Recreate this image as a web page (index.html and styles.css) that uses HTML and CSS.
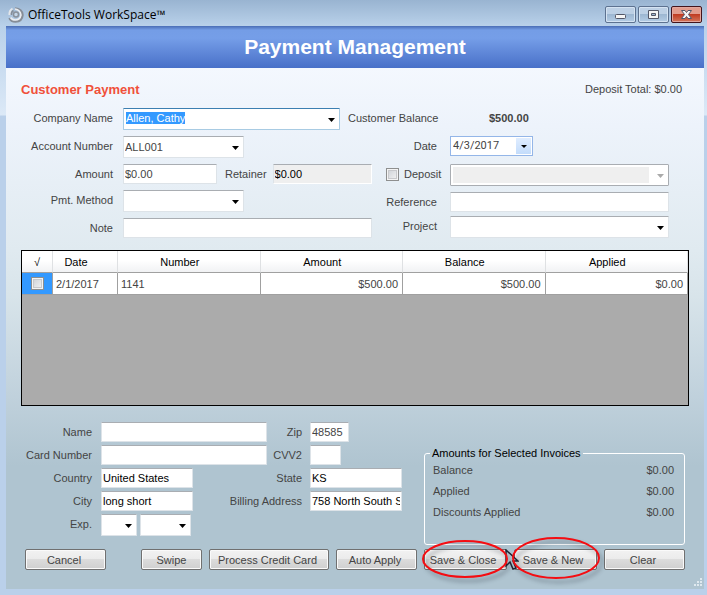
FILE: index.html
```html
<!DOCTYPE html>
<html lang="en">
<head>
    <meta charset="UTF-8">
    <meta name="viewport" content="width=device-width, initial-scale=1.0">
    <title>OfficeTools WorkSpace™</title>
    <link rel="stylesheet" href="styles.css">
</head>
<body>
    <div class="window">
        <header class="titlebar">
            <svg class="app-icon" width="16" height="16" viewBox="0 0 16 16" fill="none">
                <path d="M7 1.500 Q14 2 14.500 8 Q14 14.500 7.500 14.500 Q3 14.500 1.500 11" stroke="#868d97" stroke-width="2.500"/>
                <path d="M7 2 Q12.500 3 13 8 Q12 13 7.500 13 Q4 13 2.500 10.500" stroke="#eceef1" stroke-width="1.500"/>
                <path d="M4.500 1.500 Q1 3.500 1.500 8" stroke="#e3e6ea" stroke-width="2"/>
                <path d="M5.500 3.500 Q3 5 3.500 8" stroke="#868d97" stroke-width="1.500"/>
                <circle cx="8" cy="7.500" r="2.500" fill="#c5d6e8" stroke="#8a919b" stroke-width="1.500"/>
            </svg>
            <span class="app-name">OfficeTools WorkSpace™</span>
            <div class="window-buttons">
                <button type="button" class="window-button" aria-label="Minimize">
                    <svg width="13" height="11" viewBox="0 0 13 11"><rect x="1.5" y="5.5" width="10" height="4" rx="1" fill="#f5f5f5" stroke="#535666"/></svg>
                </button>
                <button type="button" class="window-button" aria-label="Maximize">
                    <svg width="13" height="11" viewBox="0 0 13 11"><path d="M1.5 1.5h10v8h-10z M4.500 4.500v2h4v-2z" fill="#f5f5f5" fill-rule="evenodd" stroke="#535666"/></svg>
                </button>
                <button type="button" class="window-button close" aria-label="Close">
                    <svg width="13" height="11" viewBox="0 0 13 11"><path d="M1.500 1.500h3.500l1.500 2 1.500-2h3.500l-3 4 3 4h-3.500l-1.500-2-1.500 2h-3.500l3-4z" fill="#f5f5f5" stroke="#535666"/></svg>
                </button>
            </div>
        </header>

        <main class="content">
            <h1 class="banner">Payment Management</h1>
            <form class="payment-form" id="paymentForm">
                <div class="form-head">
                    <h2>Customer Payment</h2>
                    <span class="deposit-total">Deposit Total: $0.00</span>
                </div>

                <div class="row company-row">
                    <label class="label" for="company">Company Name</label>
                    <input type="text" class="field combo company" id="company" value="Allen, Cathy" autocomplete="off">
                    <span class="balance-label">Customer Balance</span>
                    <strong class="balance">$500.00</strong>
                </div>

                <div class="columns">
                    <div class="left">
                        <div class="row">
                            <label class="label" for="account">Account Number</label>
                            <select class="field combo medium" id="account"><option>ALL001</option></select>
                        </div>
                        <div class="row">
                            <label class="label" for="amount">Amount</label>
                            <input type="text" class="field amount" id="amount" value="$0.00">
                            <label class="retainer-label" for="retainer">Retainer</label>
                            <input type="text" class="field grow readonly" id="retainer" value="$0.00" readonly>
                        </div>
                        <div class="row">
                            <label class="label" for="method">Pmt. Method</label>
                            <select class="field combo medium" id="method"><option></option></select>
                        </div>
                        <div class="row">
                            <label class="label" for="note">Note</label>
                            <input type="text" class="field grow" id="note">
                        </div>
                    </div>
                    <div class="right">
                        <div class="row tall">
                            <label class="label" for="date">Date</label>
                            <div class="date-picker">
                                <input type="text" id="date" value="4/3/2017">
                                <button type="button" aria-label="Open calendar"></button>
                            </div>
                        </div>
                        <div class="row tall">
                            <div class="deposit">
                                <input type="checkbox" class="check" id="deposit">
                                <label for="deposit">Deposit</label>
                            </div>
                            <select class="field combo grow" aria-label="Deposit" disabled><option></option></select>
                        </div>
                        <div class="row">
                            <label class="label" for="reference">Reference</label>
                            <input type="text" class="field grow" id="reference">
                        </div>
                        <div class="row">
                            <label class="label" for="project">Project</label>
                            <select class="field combo grow" id="project"><option></option></select>
                        </div>
                    </div>
                </div>

                <div class="invoices">
                    <table>
                        <thead>
                            <tr>
                                <th class="col-check">√</th>
                                <th class="col-date">Date</th>
                                <th>Number</th>
                                <th>Amount</th>
                                <th>Balance</th>
                                <th>Applied</th>
                            </tr>
                        </thead>
                        <tbody>
                            <tr>
                                <td class="selected"><input type="checkbox" class="check" aria-label="Select invoice 1141"></td>
                                <td>2/1/2017</td>
                                <td>1141</td>
                                <td class="money">$500.00</td>
                                <td class="money">$500.00</td>
                                <td class="money">$0.00</td>
                            </tr>
                        </tbody>
                    </table>
                </div>

                <div class="bottom">
                    <div class="card">
                        <div class="row">
                            <label class="label" for="name">Name</label>
                            <input type="text" class="field wide" id="name">
                            <label class="label-end" for="zip">Zip</label>
                            <div class="slot"><input type="text" class="field zip" id="zip" value="48585"></div>
                        </div>
                        <div class="row">
                            <label class="label" for="cardNumber">Card Number</label>
                            <input type="text" class="field wide" id="cardNumber">
                            <label class="label-end" for="cvv2">CVV2</label>
                            <div class="slot"><input type="text" class="field cvv" id="cvv2"></div>
                        </div>
                        <div class="row">
                            <label class="label" for="country">Country</label>
                            <input type="text" class="field place dark" id="country" value="United States">
                            <label class="label-end" for="state">State</label>
                            <div class="slot"><input type="text" class="field grow dark" id="state" value="KS"></div>
                        </div>
                        <div class="row">
                            <label class="label" for="city">City</label>
                            <input type="text" class="field place dark" id="city" value="long short">
                            <label class="label-end" for="address">Billing Address</label>
                            <div class="slot"><input type="text" class="field grow dark" id="address" value="758 North South Street"></div>
                        </div>
                        <div class="row">
                            <label class="label" for="expMonth">Exp.</label>
                            <select class="field combo month" id="expMonth"><option></option></select>
                            <select class="field combo year" aria-label="Expiration year"><option></option></select>
                        </div>
                    </div>

                    <fieldset class="totals">
                        <legend>Amounts for Selected Invoices</legend>
                        <div class="total"><span>Balance</span><span>$0.00</span></div>
                        <div class="total"><span>Applied</span><span>$0.00</span></div>
                        <div class="total"><span>Discounts Applied</span><span>$0.00</span></div>
                    </fieldset>
                </div>

                <div class="actions">
                    <button type="button" class="cancel">Cancel</button>
                    <button type="button" class="small">Swipe</button>
                    <button type="button" class="large">Process Credit Card</button>
                    <button type="button">Auto Apply</button>
                    <div class="marked">
                        <button type="submit">Save &amp; Close</button>
                        <svg class="pointer" width="14" height="22" viewBox="0 0 14 22">
                            <path d="M1 1v16l4-4 3 7 3-1-3-7h5z" fill="#b9c9d3" stroke="#1d2433" stroke-width="1.500"/>
                        </svg>
                        <svg class="ring" width="96" height="52" viewBox="0 0 96 52" fill="none">
                            <ellipse cx="45" cy="23" rx="42" ry="18" stroke="#f40d12" stroke-width="2"/>
                        </svg>
                    </div>
                    <div class="marked">
                        <button type="button">Save &amp; New</button>
                        <svg class="ring" width="96" height="52" viewBox="0 0 96 52" fill="none">
                            <ellipse cx="46" cy="22" rx="43" ry="20" stroke="#f40d12" stroke-width="2"/>
                        </svg>
                    </div>
                    <button type="reset">Clear</button>
                </div>
            </form>
            <svg class="grip" width="10" height="10" viewBox="0 0 10 10" fill="#dfe9ef">
                <path d="M7 0h2v2h-2z M4 3h2v2h-2z M7 3h2v2h-2z M1 6h2v2h-2z M4 6h2v2h-2z M7 6h2v2h-2z"/>
            </svg>
        </main>
    </div>

    <script>
        // Start with the company name selected so it can be typed over
        const company = document.getElementById('company');
        company.focus();
        company.select();

        document.getElementById('paymentForm').addEventListener('submit', function(event) {
            event.preventDefault();
        });
    </script>
</body>
</html>
```

FILE: styles.css
```css
* {
    box-sizing: border-box;
}
body {
    margin: 0;
    font-family: "Liberation Sans", Arial, sans-serif;
    font-size: 11px;
    color: #444;
}
input,
select,
button {
    font: inherit;
    color: inherit;
    margin: 0;
}
.window {
    min-height: 100vh;
    display: flex;
    flex-direction: column;
    padding: 0 3px 6px 6px;
    background: linear-gradient(#99b4d1 0, #b9d1ea 26px, #dce9f7 115px, #bad0ea 116px);
}

/* Title bar */
.titlebar {
    display: flex;
    align-items: center;
    height: 26px;
    padding: 3px 2px 0;
    gap: 4px;
}
.app-name {
    font-family: "Open Sans", "Noto Sans", sans-serif;
    font-size: 12px;
    color: #000;
}
.window-buttons {
    display: flex;
    gap: 2px;
    margin-left: auto;
}
.window-button {
    display: flex;
    align-items: center;
    justify-content: center;
    width: 31px;
    height: 17px;
    padding: 0;
    border: 1px solid #5d7290;
    border-radius: 2px;
    box-shadow: inset 0 0 0 1px #d5e3f2;
    background: linear-gradient(#bdd0e5 50%, #9db7d2 50%, #b5cde5);
}
.window-button.close {
    border-color: #43141b;
    box-shadow: inset 0 0 0 1px #e3a79d;
    background: linear-gradient(#e29c8d 50%, #c03c22 50%, #d4775c);
}

/* Page */
.content {
    position: relative;
    flex: 1;
    background: linear-gradient(#f4f8fe 42px, #edf3fb 100px, #e0eaf0 224px, #d8e4ea 270px, #c0d1dc 370px, #afc4d0 440px);
}
.banner {
    margin: 0;
    height: 42px;
    line-height: 42px;
    font-size: 21px;
    text-align: center;
    color: #fff;
    background: linear-gradient(#4a6db5 0, #749de6 4px, #759ee8 12px, #4870c8);
}
.payment-form {
    padding: 12px 15px 19px;
}
.form-head {
    display: flex;
    justify-content: space-between;
    align-items: center;
    height: 18px;
    margin-bottom: 10px;
    padding-right: 7px;
}
.form-head h2 {
    margin: 0;
    font-size: 13px;
    color: #f0503a;
}

/* Rows and fields */
.row {
    display: flex;
    align-items: flex-start;
    line-height: 20px;
}
.row.tall {
    height: 24px;
}
.label {
    flex: none;
    width: 102px;
    padding-right: 10px;
    text-align: right;
}
.field {
    display: block;
    height: 20px;
    min-width: 0;
    padding: 0 1px;
    border: 1px solid #dde3e8;
    border-top-color: #a9adb2;
    border-radius: 1px;
    outline: none;
    background-color: #fff;
}
.combo {
    appearance: none;
    height: 22px;
    padding-bottom: 2px;
    background-image: url("data:image/svg+xml,%3Csvg xmlns='http://www.w3.org/2000/svg' width='7' height='4'%3E%3Cpath d='M0 0h7L3.5 4z'/%3E%3C/svg%3E");
    background-repeat: no-repeat;
    background-position: right 4px top 9px;
}
.combo:disabled {
    opacity: 1;
    border-color: #a9adb2;
    background-image: url("data:image/svg+xml,%3Csvg xmlns='http://www.w3.org/2000/svg' width='7' height='4'%3E%3Cpath fill='%23aaa' d='M0 0h7L3.5 4z'/%3E%3C/svg%3E"), linear-gradient(#efefef, #efefef);
    background-size: 7px 4px, calc(100% - 21px) 16px;
    background-position: right 4px top 9px, 2px 2px;
}
.grow {
    flex: 1;
}
.dark {
    color: #000;
}
.readonly {
    color: #000;
    background-color: #efefef;
    border-color: #a9adb2 #fff #fff #dde3e8;
}
.company-row {
    margin-bottom: 6px;
}
.company {
    width: 217px;
    padding-left: 2px;
    border-color: #3c7fb1 #a8cbe3 #a8cbe3;
}
.company::selection {
    color: #fff;
    background: #39f;
}
.balance-label {
    margin-left: 8px;
    width: 141px;
}
.columns {
    display: flex;
}
.left {
    flex: none;
    width: 351px;
    display: flex;
    flex-direction: column;
    gap: 6px;
}
.right {
    flex: 1;
    display: flex;
    flex-direction: column;
    gap: 4px;
    padding-right: 20px;
}
.right .label {
    width: 78px;
    padding-right: 13px;
}
.medium {
    width: 121px;
}
.amount {
    width: 94px;
}
.retainer-label {
    margin: 0 6px 0 8px;
}
.date-picker {
    display: flex;
    width: 83px;
    height: 20px;
    padding: 1px;
    border: 1px solid #94b6e8;
    background: #fff;
}
.date-picker input {
    flex: 1;
    min-width: 0;
    padding: 0 1px;
    border: none;
    outline: none;
    font-family: Roboto, sans-serif;
}
.date-picker button {
    width: 15px;
    padding: 0;
    border: none;
    background: url("data:image/svg+xml,%3Csvg xmlns='http://www.w3.org/2000/svg' width='6' height='3'%3E%3Cpath d='M0 0h6L3 3z'/%3E%3C/svg%3E") no-repeat center, linear-gradient(#e0edff, #c3dcfb);
}
.check {
    appearance: none;
    flex: none;
    width: 13px;
    height: 13px;
    border: 1px solid #8e8f8f;
    box-shadow: inset 0 0 0 1px #f4f4f4, inset 0 0 0 2px #c8c9cc;
    background: linear-gradient(135deg, #cbcfd5, #f6f6f6);
}
.deposit {
    display: flex;
    align-items: center;
    gap: 5px;
    width: 78px;
    padding-left: 14px;
}

/* Invoice grid */
.invoices {
    height: 156px;
    margin-top: 12px;
    border: 1px solid #000;
    background: #ababab;
}
.invoices table {
    width: 100%;
    table-layout: fixed;
    border-collapse: separate;
    border-spacing: 0;
}
.invoices th {
    height: 22px;
    padding: 0 18px 0 0;
    border-right: 1px solid #dfe1e3;
    border-bottom: 1px solid #a0a0a0;
    font-weight: normal;
    color: #000;
    background: linear-gradient(#fff 45%, #f1f2f4);
}
.invoices .col-check {
    width: 31px;
    padding: 0;
}
.invoices .col-date {
    width: 65px;
}
.invoices td {
    height: 22px;
    padding: 0 3px;
    border-right: 1px solid #a0a0a0;
    border-bottom: 1px solid #a0a0a0;
    background: #fff;
}
.invoices .money {
    padding-right: 4px;
    text-align: right;
}
.invoices .selected {
    text-align: center;
    background: #39f;
}
.selected .check {
    display: block;
    margin: auto;
}

/* Card details and totals */
.bottom {
    display: flex;
    align-items: flex-start;
    gap: 22px;
    margin-top: 16px;
    padding-right: 4px;
}
.card {
    flex: none;
    width: 381px;
    display: flex;
    flex-direction: column;
    gap: 3px;
}
.card .label {
    width: 80px;
    padding-right: 9px;
}
.label-end {
    margin-left: auto;
    padding-right: 8px;
}
.slot {
    display: flex;
    width: 92px;
}
.wide {
    width: 166px;
}
.place {
    width: 92px;
}
.zip {
    width: 39px;
}
.cvv {
    width: 31px;
}
.month {
    width: 36px;
    margin-right: 3px;
}
.year {
    width: 51px;
}
.totals {
    flex: 1;
    min-width: 0;
    margin: 24px 0 0;
    padding: 0 10px 21px 8px;
    border: 1px solid #fff;
    border-radius: 3px;
}
.totals legend {
    margin-left: -3px;
    padding: 0 2px;
    line-height: 14px;
    color: #000;
}
.total {
    display: flex;
    justify-content: space-between;
    line-height: 21px;
}

/* Buttons */
.actions {
    display: flex;
    gap: 7px;
    margin-top: 4px;
    padding: 0 4px;
}
.actions button {
    display: block;
    width: 81px;
    height: 21px;
    padding: 0 3px 0 0;
    border: 1px solid #707070;
    border-radius: 2px;
    box-shadow: inset 0 0 0 1px #fafafa;
    background: linear-gradient(#f2f2f2 0, #ebebeb 50%, #dcdcdc 50%, #cfcfcf);
}
.actions .cancel {
    margin-right: auto;
}
.actions .small {
    width: 61px;
    padding: 0;
}
.actions .large {
    width: 120px;
}
.actions .marked button {
    width: 83px;
    padding-right: 5px;
}
.marked {
    position: relative;
}
.ring {
    position: absolute;
    z-index: 2;
    left: -4px;
    top: -13px;
    pointer-events: none;
    filter: drop-shadow(3px 4px 2px rgba(50, 60, 70, 0.45));
}
.pointer {
    position: absolute;
    z-index: 1;
    left: 81px;
    top: 0;
    pointer-events: none;
}
.grip {
    position: absolute;
    right: 1px;
    bottom: 1px;
}
```
